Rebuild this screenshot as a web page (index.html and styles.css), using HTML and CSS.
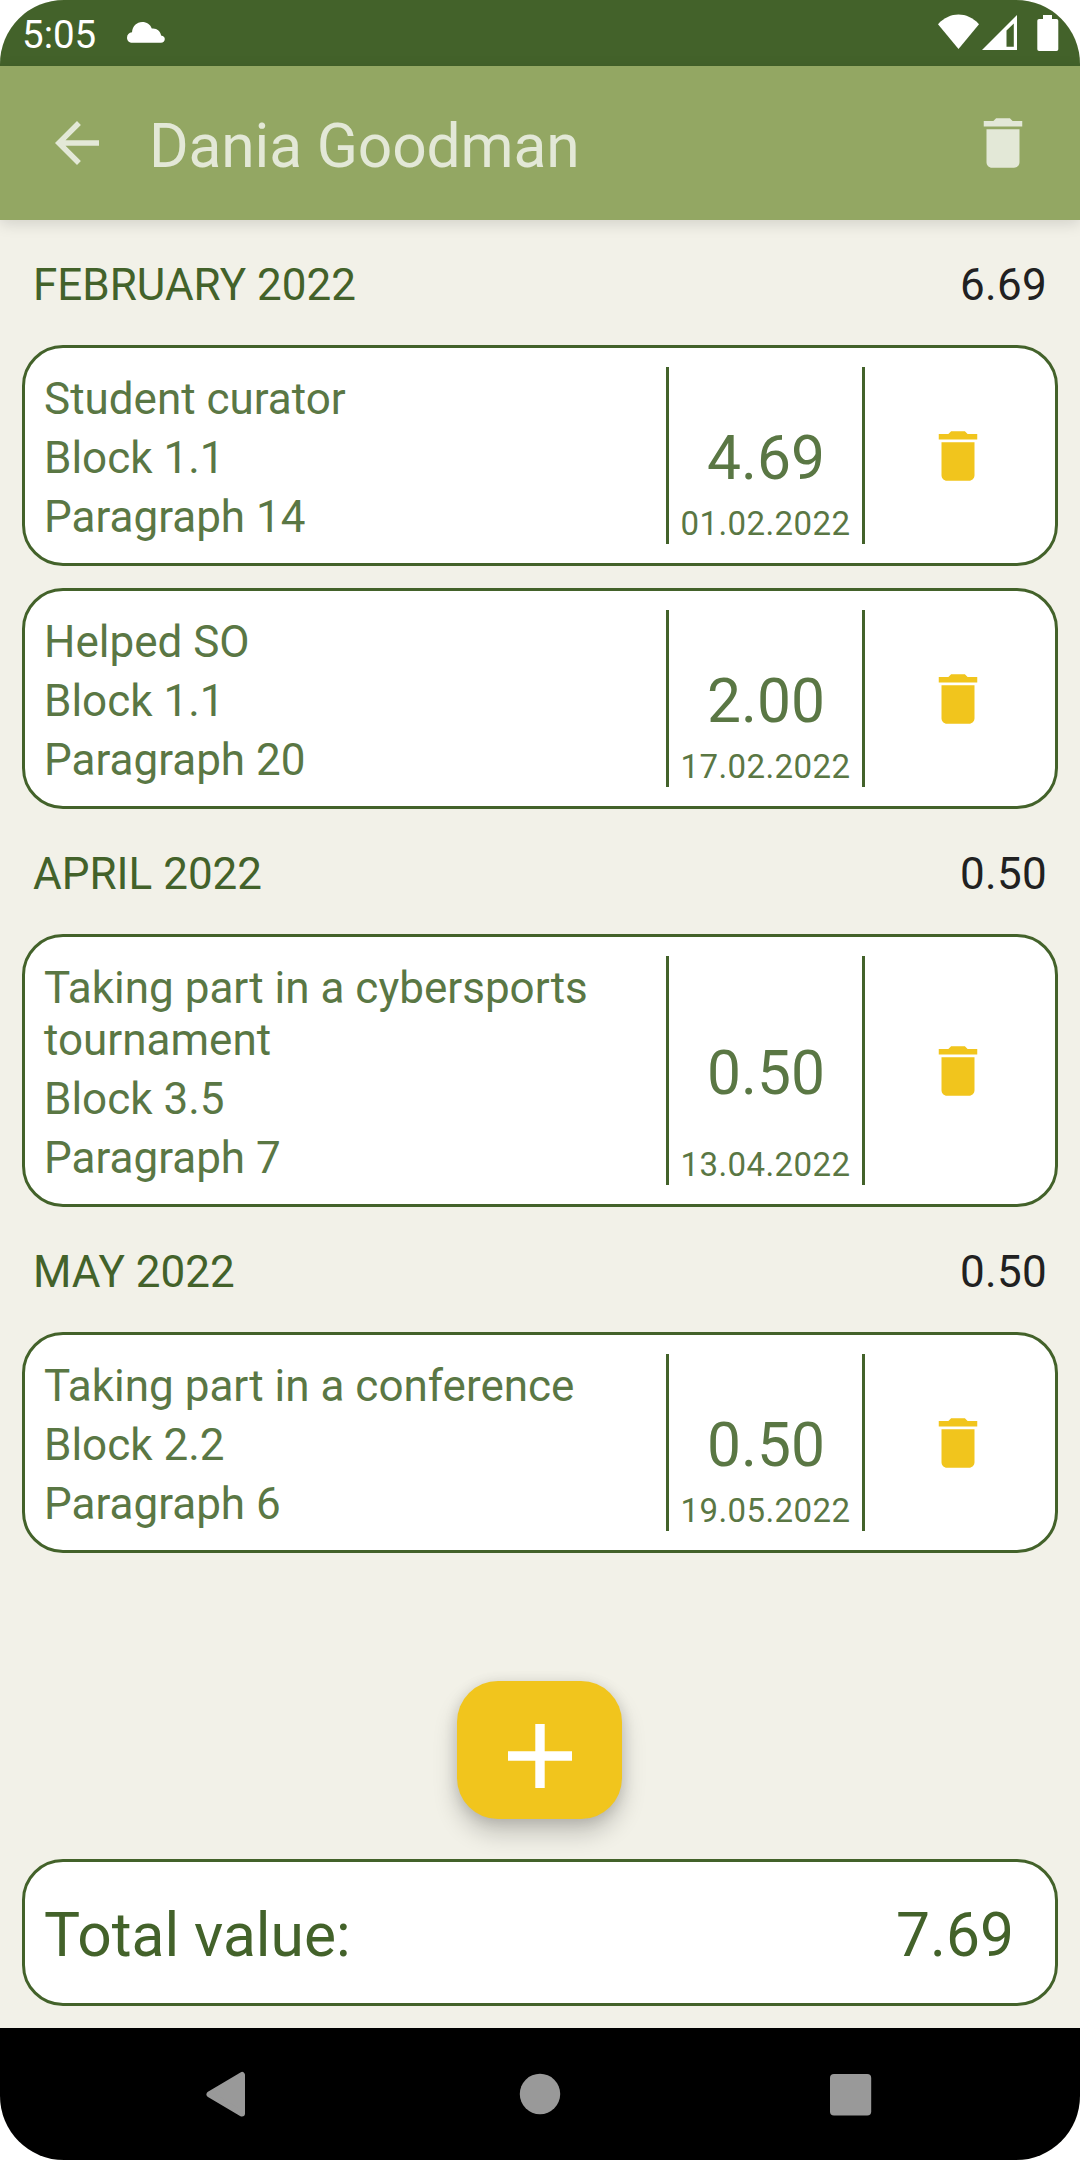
FILE: index.html
```html
<!DOCTYPE html>
<html lang="en">
<head>
<meta charset="utf-8">
<title>Dania Goodman</title>
<link rel="stylesheet" href="styles.css">
</head>
<body>
<svg class="defs" width="0" height="0">
  <symbol id="trash" viewBox="0 0 24 24"><path d="M6 19c0 1.1.9 2 2 2h8c1.1 0 2-.9 2-2V7H6v12zM19 4h-3.5l-1-1h-5l-1 1H5v2h14V4z"/></symbol>
</svg>
<div class="screen">
  <header class="status">
    <span class="time">5:05</span>
    <svg class="cloud" width="38" height="22" viewBox="0 0 38 22"><path fill="#fff" d="M5.500 20.800C2.300 20.800 0 18.600 0 15.700c0-3 2-5.100 5-5.400C5.500 4.200 9.800 0 15.200 0c4.500 0 8.300 2.500 9.600 6.600 5-.6 8.600 2.500 9.300 7 2.400.3 3.700 1.600 3.700 3.500 0 2.200-1.600 3.700-3.900 3.700z"/></svg>
    <svg class="indicators" width="122" height="38" viewBox="0 0 122 38" fill="#fff">
      <path d="M1 10.200C13-2.600 30-2.600 42 10.200L21.500 35z"/>
      <path fill-rule="evenodd" d="M45 36L80 1v35zM69.500 16.500v16.300h7.300V9.500z"/>
      <path d="M106 1h9v4h4.500a1.800 1.800 0 0 1 1.800 1.800v28.400a1.800 1.800 0 0 1-1.800 1.800h-17.400a1.800 1.800 0 0 1-1.800-1.800V6.800A1.800 1.800 0 0 1 102.100 5h3.900z"/>
    </svg>
  </header>
  <div class="appbar">
    <svg class="icon" viewBox="0 0 24 24"><path d="M20 11H7.830l5.590-5.590L12 4l-8 8 8 8 1.410-1.410L7.830 13H20v-2z"/></svg>
    <h1 class="title">Dania Goodman</h1>
    <svg class="icon"><use href="#trash"/></svg>
  </div>
  <main class="content">
    <section class="month">
      <div class="month-head"><h2 class="month-name">FEBRUARY 2022</h2><span class="month-sum">6.69</span></div>
      <div class="cards">
        <article class="card">
          <div class="info"><p>Student curator</p><p>Block 1.1</p><p>Paragraph 14</p></div>
          <div class="score"><span class="value">4.69</span><span class="date">01.02.2022</span></div>
          <div class="remove"><svg class="icon"><use href="#trash"/></svg></div>
        </article>
        <article class="card">
          <div class="info"><p>Helped SO</p><p>Block 1.1</p><p>Paragraph 20</p></div>
          <div class="score"><span class="value">2.00</span><span class="date">17.02.2022</span></div>
          <div class="remove"><svg class="icon"><use href="#trash"/></svg></div>
        </article>
      </div>
    </section>
    <section class="month">
      <div class="month-head"><h2 class="month-name">APRIL 2022</h2><span class="month-sum">0.50</span></div>
      <div class="cards">
        <article class="card">
          <div class="info"><p>Taking part in a cybersports tournament</p><p>Block 3.5</p><p>Paragraph 7</p></div>
          <div class="score"><span class="value">0.50</span><span class="date">13.04.2022</span></div>
          <div class="remove"><svg class="icon"><use href="#trash"/></svg></div>
        </article>
      </div>
    </section>
    <section class="month">
      <div class="month-head"><h2 class="month-name">MAY 2022</h2><span class="month-sum">0.50</span></div>
      <div class="cards">
        <article class="card">
          <div class="info"><p>Taking part in a conference</p><p>Block 2.2</p><p>Paragraph 6</p></div>
          <div class="score"><span class="value">0.50</span><span class="date">19.05.2022</span></div>
          <div class="remove"><svg class="icon"><use href="#trash"/></svg></div>
        </article>
      </div>
    </section>
    <div class="fab">
      <svg width="64" height="64" viewBox="0 0 64 64"><path fill="#fff" d="M27.300 0h9.400v27.300H64v9.400H36.700V64h-9.400V36.700H0v-9.400h27.300z"/></svg>
    </div>
    <div class="total"><span>Total value:</span><span>7.69</span></div>
  </main>
  <nav class="navbar">
    <svg width="1080" height="132" viewBox="0 0 1080 132" fill="#999">
      <path stroke="#999" stroke-width="6" stroke-linejoin="round" d="M209.500 66.300L242 47v38.600z"/>
      <circle cx="540" cy="66" r="20.200"/>
      <rect x="830" y="46" width="41.200" height="41.500" rx="4"/>
    </svg>
  </nav>
</div>
</body>
</html>
```
FILE: styles.css
```css
* { box-sizing: border-box; }

body {
  margin: 0;
  background: #fff;
  font-family: Roboto, "Liberation Sans", sans-serif;
}

h1, h2, p { margin: 0; font-weight: 400; }

.defs { display: none; }

.screen {
  width: 1080px;
  height: 2160px;
  display: flex;
  flex-direction: column;
  overflow: hidden;
  border-radius: 64px;
  background: #f2f1e8;
}

.status {
  height: 66px;
  padding: 0 21px 0 22px;
  display: flex;
  align-items: flex-start;
  background: #43622a;
  color: #fff;
}

.time { padding-top: 12px; font-size: 38.5px; line-height: 45px; }
.cloud { margin: 22px 0 0 31px; }
.indicators { margin: 14px 0 0 auto; }

.appbar {
  height: 154px;
  padding: 0 44px;
  display: flex;
  align-items: center;
  background: #93a763;
  color: #e3e8d7;
  box-shadow: 0 4px 14px rgba(0, 0, 0, 0.13);
}

.icon { width: 66px; height: 66px; fill: currentColor; flex: none; display: block; }

.title {
  flex: 1;
  padding: 7px 0 0 39px;
  font-size: 60.5px;
  line-height: 71px;
  letter-spacing: -0.15px;
}

.content {
  flex: 1;
  padding: 0 22px 22px;
  display: flex;
  flex-direction: column;
}

.month-head {
  padding: 39px 11px 34px;
  display: flex;
  justify-content: space-between;
  font-size: 44px;
  line-height: 52px;
  color: #212121;
}

.month-name { font-size: inherit; color: #43622a; }
.month-sum { letter-spacing: 0.3px; }

.cards { display: flex; flex-direction: column; gap: 22px; }

.card {
  display: grid;
  grid-template-columns: 1fr 199px 190px;
  border: 3px solid #43622a;
  border-radius: 41px;
  background: #fff;
  color: #5a7744;
}

.info {
  padding: 25px 19px 20px;
  display: flex;
  flex-direction: column;
  gap: 7px;
  font-size: 44px;
  line-height: 52px;
}

.score {
  margin: 19px 0;
  display: grid;
  justify-items: center;
  border: solid #43622a;
  border-width: 0 3px;
}

.value, .date { grid-area: 1 / 1; }
.value { align-self: center; padding: 5px 0 0 1px; font-size: 60.5px; line-height: 71px; }
.date { align-self: end; padding-bottom: 1px; font-size: 33px; line-height: 39px; letter-spacing: 0.4px; }

.remove {
  padding-right: 4px;
  display: flex;
  align-items: center;
  justify-content: center;
  color: #f1c51d;
}

.fab {
  width: 165px;
  height: 138px;
  margin: auto auto 40px 435px;
  padding: 12px 0 0 1px;
  display: flex;
  align-items: center;
  justify-content: center;
  border-radius: 41px;
  background: #f1c51d;
  box-shadow: 0 14px 24px rgba(0, 0, 0, 0.2), 0 2px 14px rgba(0, 0, 0, 0.12);
}

.total {
  height: 147px;
  padding: 38px 41px 0 19px;
  display: flex;
  justify-content: space-between;
  border: 3px solid #43622a;
  border-radius: 41px;
  background: #fff;
  color: #43622a;
  font-size: 60.5px;
  line-height: 71px;
}

.navbar { height: 132px; background: #000; }
.navbar svg { display: block; }
```
